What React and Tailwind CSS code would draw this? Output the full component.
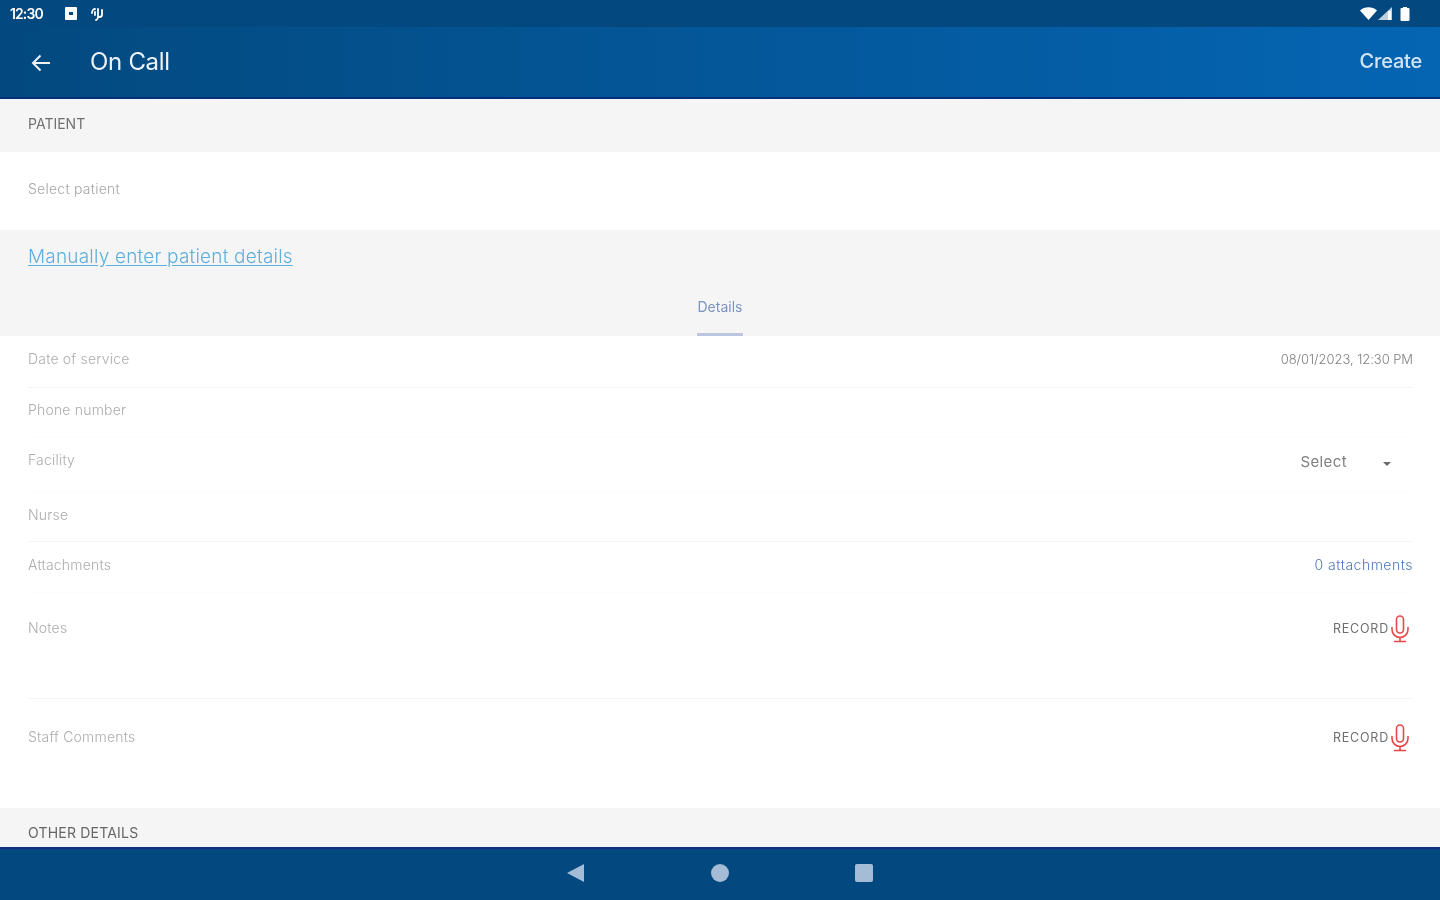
import React from "react";

function Mic() {
  return (
    <svg width="20" height="28" viewBox="0 0 20 28" fill="none" stroke="#e8474a" strokeWidth="1.6" strokeLinecap="round" className="blur-[0.5px]">
      <rect x="6.5" y="1" width="7" height="17" rx="3.5" />
      <path d="M2 12.5v2a8 8 0 0 0 16 0v-2" />
      <path d="M10 22.5v3.5M4.5 26.5h11" />
    </svg>
  );
}

function Row({ label, h, border, top, children }) {
  return (
    <div className={`flex justify-between border-b ${border ? "border-[#f3f3f3]" : "border-[#fcfcfc]"} ${h} ${top}`}>
      <span className="text-[14px] leading-[20px] font-light text-[#adadad] tracking-[0.2px] blur-[0.6px]">{label}</span>
      {children}
    </div>
  );
}

function Record() {
  return (
    <div className="flex items-center gap-[1px] -mt-[3px] mr-[3px] h-[28px]">
      <span className="text-[12.5px] text-[#6f6f6f] tracking-[0.8px] blur-[0.6px]">RECORD</span>
      <Mic />
    </div>
  );
}

export default function App() {
  return (
    <div style={{ fontFamily: "Inter, 'Liberation Sans', sans-serif" }} className="w-[1440px] h-[900px] flex flex-col overflow-hidden bg-white">
      <div className="h-[27px] bg-[#03487f] flex items-center justify-between pl-[10px] pr-[30px] shrink-0">
        <div className="flex items-center gap-[13px] text-white blur-[0.6px]">
          <span className="text-[14px] font-semibold tracking-[-0.9px] w-[42px]">12:30</span>
          <svg width="12" height="13" viewBox="0 0 12 13">
            <path fillRule="evenodd" d="M1 0h10a1 1 0 0 1 1 1v11a1 1 0 0 1-1 1H1a1 1 0 0 1-1-1V1a1 1 0 0 1 1-1zm3 5v3h4V5z" fill="#fff" />
          </svg>
          <svg width="16" height="16" viewBox="0 0 16 16" fill="none" stroke="#fff" strokeWidth="1.8" strokeLinecap="round" className="-ml-[1px]">
            <path d="M3 7c0-3 2-4 3-4M6 6v3M9 3v8c0 1-1 3-2 3M13 4v5c0 1-1 2-3 2" />
          </svg>
        </div>
        <div className="flex items-center gap-[1px] blur-[0.5px]">
          <svg width="17" height="13" viewBox="0 0 17 13"><path d="M0 3.5C4.5-.8 12.5-.8 17 3.5L8.5 13z" fill="#fff" /></svg>
          <svg width="14" height="13" viewBox="0 0 14 13">
            <path d="M14 0v13H0z" fill="#fff" fillOpacity="0.75" />
            <path d="M10 4h3v9h-3z" fill="#fff" />
          </svg>
          <svg width="10" height="14" viewBox="0 0 10 14" className="ml-[7px]">
            <path d="M3 0h4v1h1.5a1 1 0 0 1 1 1v11a1 1 0 0 1-1 1h-7a1 1 0 0 1-1-1V2a1 1 0 0 1 1-1H3z" fill="#fff" />
          </svg>
        </div>
      </div>

      <div className="h-[72px] shrink-0 bg-gradient-to-r from-[#03497f] to-[#0565b3] border-b-[2px] border-[#02307a] flex items-center justify-between pl-[30px] pr-[18px]">
        <div className="flex items-center">
          <svg width="22" height="22" viewBox="0 0 22 22" fill="none" stroke="#eef3f8" strokeWidth="2" className="mt-[2px] blur-[0.5px]">
            <path d="M20 11H3M10.5 3.5 3 11l7.5 7.5" />
          </svg>
          <span className="ml-[38px] text-[24px] text-[#eef3f8] tracking-[-0.3px] blur-[0.6px]">On Call</span>
        </div>
        <span className="text-[20px] font-medium text-[#d5e4f3] tracking-[-0.2px] blur-[0.5px] -mt-[2px]">Create</span>
      </div>

      <div className="h-[53px] shrink-0 bg-[#f5f5f5] px-[28px] pt-[16px] text-[14px] leading-[18px] text-[#707070] blur-[0.5px]">PATIENT</div>

      <div className="h-[78px] shrink-0 bg-white px-[28px] pt-[28px] text-[14px] leading-[18px] font-light text-[#a6a6a6] tracking-[0.25px] blur-[0.6px]">Select patient</div>

      <div className="h-[106px] shrink-0 bg-[#f5f5f5] relative">
        <div className="px-[28px] pt-[15px]">
          <a className="text-[19px] leading-[24px] font-light text-[#5fb0dc] underline underline-offset-2 tracking-[0.2px] blur-[0.5px]">Manually enter patient details</a>
        </div>
        <div className="absolute left-0 right-0 bottom-0 flex justify-center">
          <div className="w-[46px] flex flex-col items-center">
            <span className="text-[14px] leading-[18px] whitespace-nowrap text-[#7d93c0] blur-[0.6px]">Details</span>
            <div className="w-[46px] h-[3px] mt-[17px] bg-[#bcc6de] blur-[0.5px]" />
          </div>
        </div>
      </div>

      <div className="flex-1 min-h-0 pl-[28px] pr-[27px] flex flex-col">
        <Row label="Date of service" h="h-[52px]" top="pt-[13px]" border>
          <span className="text-[13px] leading-[20px] font-light text-[#808080] tracking-[-0.05px] blur-[0.5px]">08/01/2023, 12:30 PM</span>
        </Row>
        <Row label="Phone number" h="h-[50px]" top="pt-[12px]" />
        <Row label="Facility" h="h-[54px]" top="pt-[12px]">
          <div className="flex items-center mr-[22px] mt-[1px] h-[22px]">
            <span className="text-[15px] text-[#808080] tracking-[0.4px] blur-[0.5px]">Select</span>
            <span className="ml-[36px] mt-[3px] w-0 h-0 border-x-[4.5px] border-x-transparent border-t-[4.5px] border-t-[#6a6a6a]" />
          </div>
        </Row>
        <Row label="Nurse" h="h-[50px]" top="pt-[13px]" border />
        <Row label="Attachments" h="h-[51px]" top="pt-[13px]">
          <span className="text-[14px] leading-[20px] font-light text-[#4f78bd] tracking-[0.5px] blur-[0.5px]">0 attachments</span>
        </Row>
        <Row label="Notes" h="h-[106px]" top="pt-[25px]" border>
          <Record />
        </Row>
        <div className="flex justify-between h-[109px] pt-[28px]">
          <span className="text-[14px] leading-[20px] font-light text-[#adadad] tracking-[0.2px] blur-[0.6px]">Staff Comments</span>
          <Record />
        </div>
      </div>

      <div className="h-[39px] shrink-0 bg-[#f5f5f5] px-[28px] pt-[16px] text-[14px] leading-[18px] tracking-[0.2px] text-[#666666] blur-[0.5px]">OTHER DETAILS</div>

      <div className="h-[53px] shrink-0 bg-[#03487f] border-t-[2px] border-[#12307e] flex items-center justify-center gap-[126px] pb-[3px]">
        <svg width="18" height="20" viewBox="0 0 18 20" className="blur-[0.5px] -translate-x-[1px]"><path d="M18 1v18L1 10z" fill="#a4bcd6" /></svg>
        <span className="w-[18px] h-[18px] rounded-full bg-[#a4bcd6] blur-[0.5px]" />
        <span className="w-[18px] h-[18px] rounded-[2px] bg-[#a4bcd6] blur-[0.5px]" />
      </div>
    </div>
  );
}
